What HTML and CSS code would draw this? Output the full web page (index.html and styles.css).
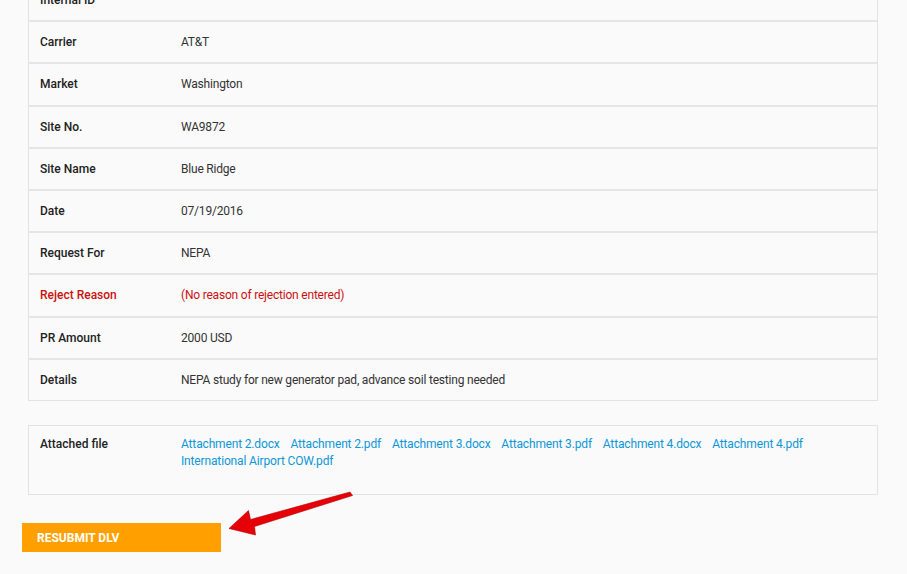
FILE: index.html
```html
<!DOCTYPE html>
<html>
<head>
<meta charset="utf-8">
<link rel="stylesheet" href="styles.css">
</head>
<body>
<div class="page">
  <div class="details">
    <div class="row"><div class="label">Internal ID</div><div class="value"></div></div>
    <div class="row"><div class="label">Carrier</div><div class="value">AT&amp;T</div></div>
    <div class="row"><div class="label">Market</div><div class="value">Washington</div></div>
    <div class="row"><div class="label">Site No.</div><div class="value">WA9872</div></div>
    <div class="row"><div class="label">Site Name</div><div class="value">Blue Ridge</div></div>
    <div class="row"><div class="label">Date</div><div class="value">07/19/2016</div></div>
    <div class="row"><div class="label">Request For</div><div class="value">NEPA</div></div>
    <div class="row reject"><div class="label">Reject Reason</div><div class="value">(No reason of rejection entered)</div></div>
    <div class="row"><div class="label">PR Amount</div><div class="value">2000 USD</div></div>
    <div class="row last"><div class="label">Details</div><div class="value">NEPA study for new generator pad, advance soil testing needed</div></div>
  </div>
  <div class="attachments">
    <div class="label">Attached file</div>
    <div class="files">
      <a href="#">Attachment 2.docx</a>
      <a href="#">Attachment 2.pdf</a>
      <a href="#">Attachment 3.docx</a>
      <a href="#">Attachment 3.pdf</a>
      <a href="#">Attachment 4.docx</a>
      <a href="#">Attachment 4.pdf</a>
      <a href="#">International Airport COW.pdf</a>
    </div>
  </div>
  <div class="actions">
    <button class="resubmit">RESUBMIT DLV</button>
  </div>
  <svg class="arrow" width="140" height="50" viewBox="220 488 140 50">
    <polygon points="229,528.5 248.5,510.5 250.5,519.5 350,492 352.5,495.5 254.5,526.5 255.5,535" fill="#e60008" stroke="#b00006" stroke-width="0.6" stroke-linejoin="round"/>
  </svg>
</div>
</body>
</html>
```
FILE: styles.css
```css
html, body {
  margin: 0;
  padding: 0;
  background: #fafafa;
}
body {
  font-family: Roboto, "Noto Sans", "Liberation Sans", sans-serif;
  font-size: 12px;
  color: #333;
}
.page {
  position: relative;
  width: 907px;
  height: 574px;
  overflow: hidden;
}
.details {
  margin: -20px 0 0 28px;
  width: 848px;
  border: 1px solid #e3e3e3;
  border-top: 0;
  background: #fafafa;
}
.row {
  display: flex;
  align-items: center;
  height: 40.2px;
  border-bottom: 2px solid #e5e5e5;
}
.row.last {
  border-bottom: 0;
}
.label {
  width: 141px;
  padding-left: 11px;
  font-weight: 500;
  color: #222;
  flex: none;
}
.value {
  color: #333;
  letter-spacing: -0.2px;
}
.reject .label,
.reject .value {
  color: #cc1111;
}
.attachments {
  display: flex;
  align-items: flex-start;
  margin: 24px 0 0 28px;
  width: 848px;
  height: 68px;
  border: 1px solid #e3e3e3;
}
.attachments .label {
  padding-top: 10px;
  line-height: 17px;
}
.files {
  padding-top: 10px;
  line-height: 17px;
  width: 650px;
  letter-spacing: -0.15px;
}
.files a {
  color: #0d97d8;
  text-decoration: none;
  margin-right: 8px;
}
.actions {
  margin: 28px 0 0 22px;
}
.resubmit {
  display: block;
  width: 199px;
  height: 29px;
  border: 0;
  background: #ffa000;
  color: #fff;
  font-family: Roboto, "Noto Sans", "Liberation Sans", sans-serif;
  font-size: 12px;
  font-weight: 700;
  text-align: left;
  padding: 1px 0 0 15px;
}
.arrow {
  position: absolute;
  left: 220px;
  top: 488px;
}
```
